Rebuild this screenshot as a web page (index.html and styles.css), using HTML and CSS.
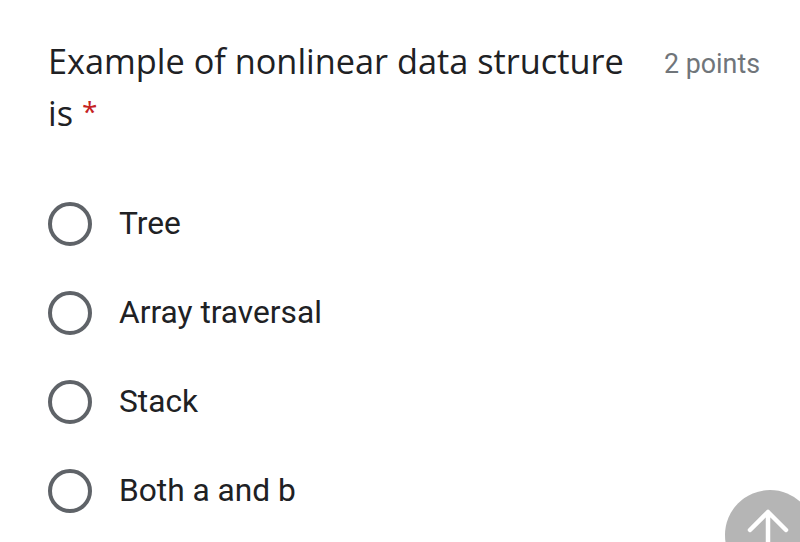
FILE: index.html
```html
<!DOCTYPE html>
<html>
<head>
<meta charset="utf-8">
<link rel="stylesheet" href="styles.css">
</head>
<body>
<div class="page">
  <div class="header">
    <div class="title">Example of nonlinear data structure is <span class="req">*</span></div>
    <div class="points">2 points</div>
  </div>
  <div class="options">
    <div class="option"><span class="radio"></span><span class="label">Tree</span></div>
    <div class="option"><span class="radio"></span><span class="label">Array traversal</span></div>
    <div class="option"><span class="radio"></span><span class="label">Stack</span></div>
    <div class="option"><span class="radio"></span><span class="label">Both a and b</span></div>
  </div>
</div>
<div class="fab-clip">
  <div class="fab">
    <svg width="90" height="90" viewBox="0 0 90 90"><path d="M25 40 L43 22 L61 40 M43 22 L43 90" fill="none" stroke="#fff" stroke-width="4.5" stroke-linecap="round" stroke-linejoin="round"/></svg>
  </div>
</div>
</body>
</html>
```
FILE: styles.css
```css
html, body { margin: 0; padding: 0; background: #fff; overflow: hidden; }
body { width: 800px; height: 542px; position: relative; }
.page { padding: 35px 40px 0 48px; }
.header { display: flex; justify-content: space-between; align-items: flex-start; }
.title {
  font-family: "Open Sans", sans-serif;
  font-size: 34.3px;
  line-height: 52px;
  color: #202124;
  width: 600px;
}
.req { display: inline-block; color: #c5221f; font-size: 28px; vertical-align: 4px; line-height: 1; }
.points {
  font-family: Roboto, sans-serif;
  font-size: 26.8px;
  line-height: 53px;
  margin-top: 3px;
  color: #70757a;
}
.options { margin-top: 40px; }
.option { display: flex; align-items: center; height: 89px; }
.radio {
  width: 36px; height: 36px;
  border: 4px solid #5f6368;
  border-radius: 50%;
  flex: none;
}
.label {
  font-family: Roboto, sans-serif;
  font-size: 31.7px;
  color: #202124;
  margin-left: 27px;
}
.fab-clip {
  position: absolute;
  left: 725px; top: 490px;
  width: 75px; height: 52px;
  overflow: hidden;
}
.fab {
  width: 90px; height: 90px;
  border-radius: 50%;
  background: #b5b5b5;
}
.fab svg { display: block; }
```
